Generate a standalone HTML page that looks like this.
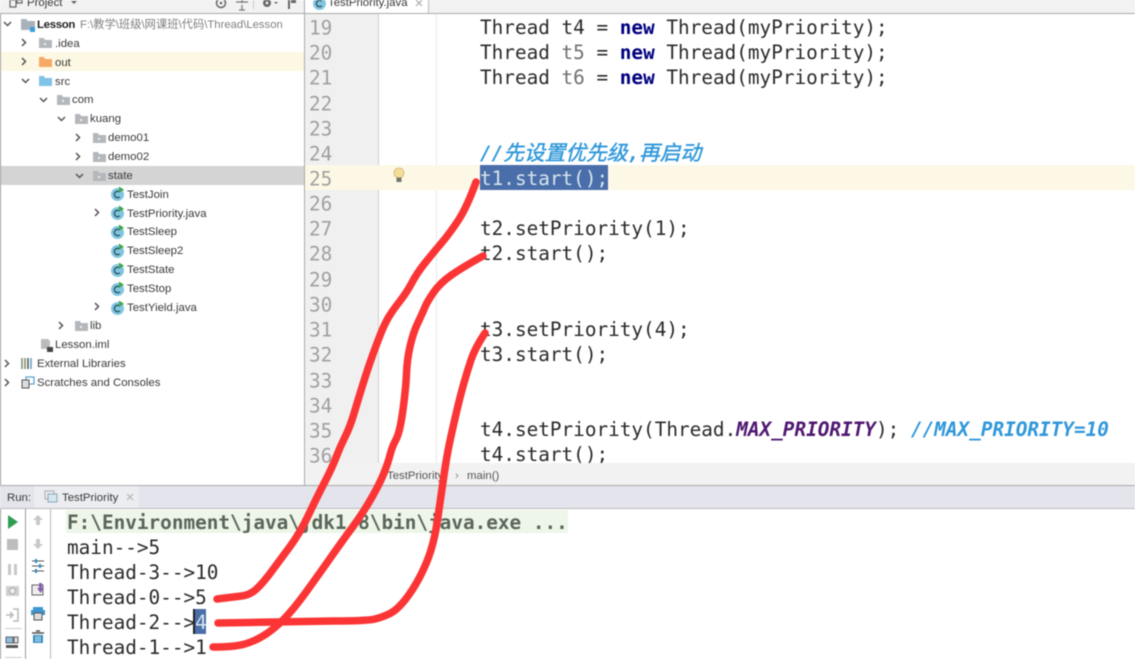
<!DOCTYPE html>
<html><head><meta charset="utf-8"><style>
html,body{margin:0;padding:0;background:#fff}
#r{position:relative;width:1135px;height:659px;overflow:hidden;background:#fff;filter:blur(.4px)}
#r div,#r span.a{position:absolute}
.t{font:11.4px/19px "Liberation Sans","Noto Sans CJK SC",sans-serif;color:#3a3a3a;white-space:nowrap;height:19px}
.c{font:19.35px/25px "DejaVu Sans Mono","Noto Sans CJK SC",monospace;color:#2a2a2a;white-space:pre;height:25px}
.n{left:309px;color:#a0a0a0;transform:translateY(.5px)}
b.k{color:#000080}
.cm{color:#2f97da;font-weight:bold;font-style:italic}
.zh{font-size:20.7px;font-weight:normal;-webkit-text-stroke:.4px #2f97da}
.p{color:#4f1770;font-weight:bold;font-style:italic}
.g{color:#707070}
svg{position:absolute;left:0;top:0}
</style></head><body><div id="r">
<div style="left:0;top:0;width:1135px;height:14px;background:#f2f2f2"></div>
<div style="left:304px;top:0;width:125px;height:13px;background:#fff"></div>
<div style="left:428px;top:0;width:1px;height:13px;background:#bbb"></div>
<div style="left:0;top:13px;width:1135px;height:1px;background:#aaa"></div>
<div style="left:0;top:14px;width:1px;height:645px;background:#999"></div>
<div style="left:304px;top:0;width:1px;height:486px;background:#aaa"></div>
<div style="left:1px;top:52px;width:303px;height:19px;background:#fdf8e3"></div>
<div style="left:1px;top:166px;width:303px;height:19px;background:#d4d4d4"></div>
<div style="left:305px;top:14px;width:74px;height:449px;background:#f0f0f0"></div>
<div style="left:378px;top:14px;width:1px;height:449px;background:#d0d0d0"></div>
<div style="left:436px;top:14px;width:1px;height:449px;background:#e8e8e8"></div>
<div style="left:305px;top:165px;width:830px;height:25px;background:#fdf8e6"></div>
<div style="left:480px;top:165px;width:128px;height:25px;background:#4a6ea9"></div>
<div style="left:305px;top:463px;width:830px;height:22px;background:#f2f2f2"></div>
<div style="left:0;top:485px;width:1135px;height:1px;background:#aaa"></div>
<div style="left:0;top:486px;width:1135px;height:22px;background:#e3e4ec"></div>
<div style="left:34px;top:486px;width:105px;height:23px;background:#ebedf1"></div>
<div style="left:0;top:508px;width:1135px;height:1px;background:#bdbdbd"></div>
<div style="left:25px;top:509px;width:1px;height:150px;background:#999"></div>
<div style="left:50px;top:509px;width:1px;height:150px;background:#b5b5b5"></div>
<div style="left:66px;top:510px;width:502px;height:23px;background:#edf6e9"></div>
<div style="left:194px;top:609px;width:12px;height:25px;background:#4a6ea9"></div>
<div style="left:193px;top:609px;width:2px;height:25px;background:#222"></div>

<svg width="1135" height="659" viewBox="0 0 1135 659">
<defs>
<g id="f"><path d="M0 1h5l1 2h7v8H0z" fill="#b4b8bc"/><rect x="5" y="6" width="2" height="2" fill="#eee"/></g>
<g id="k"><circle cx="6.500" cy="6.500" r="6.500" fill="#7fc6e0"/><path d="M8.800 4.200A3.200 3.200 0 1 0 8.800 8.800" fill="none" stroke="#34505c" stroke-width="1.300"/><path d="M8 -1.500l5 3.200-5 3.200z" fill="#3fa54a"/></g>
<path id="cr" d="M0 0l3.500 3.500L0 7" fill="none" stroke="#555" stroke-width="1.500"/>
<path id="cd" d="M0 0l3.500 3.500L7 0" fill="none" stroke="#555" stroke-width="1.500"/>
</defs>
<!-- top toolbar -->
<path d="M10 0v7h6V0zM17 0h5v3h-5z" fill="none" stroke="#666" stroke-width="1.200"/>
<path d="M71 1l3 3 3-3z" fill="#666"/>
<circle cx="221" cy="3" r="4.500" fill="none" stroke="#666" stroke-width="1.500"/><circle cx="221" cy="3" r="1.300" fill="#666"/>
<path d="M236 2h12M242 5v5M239 10h6M242 0v3" stroke="#777" stroke-width="1.200" fill="none"/>
<rect x="253" y="0" width="1" height="9" fill="#ccc"/>
<circle cx="267" cy="3" r="4" fill="#666"/><circle cx="267" cy="3" r="1.400" fill="#f2f2f2"/><path d="M274 2l2 2 2-2z" fill="#666"/>
<path d="M288 0v9h2V0zM291 0h5v3h-5z" fill="#666"/>
<!-- tree chevrons -->
<use href="#cd" x="4" y="22"/><use href="#cr" x="22" y="39"/><use href="#cr" x="22" y="58"/>
<use href="#cd" x="22" y="79"/><use href="#cd" x="40" y="98"/><use href="#cd" x="58" y="117"/>
<use href="#cr" x="76" y="134"/><use href="#cr" x="76" y="153"/><use href="#cd" x="76" y="174"/>
<use href="#cr" x="95" y="209"/><use href="#cr" x="95" y="303"/><use href="#cr" x="59" y="322"/>
<use href="#cr" x="5" y="360"/><use href="#cr" x="5" y="379"/>
<!-- folder icons -->
<path d="M21 19h5l2 2h7v9H21z" fill="#a9b2ba"/><rect x="30" y="27" width="5" height="5" fill="#3aa0dc"/>
<use href="#f" x="39" y="37"/>
<path d="M39 57h5l1 2h7v8H39z" fill="#f6a866"/>
<path d="M39 76h5l1 2h7v8H39z" fill="#7fc4e6"/>
<use href="#f" x="57" y="94"/><use href="#f" x="75" y="113"/><use href="#f" x="93" y="132"/><use href="#f" x="93" y="151"/><use href="#f" x="93" y="170"/>
<use href="#f" x="75" y="320"/>
<!-- class icons -->
<use href="#k" x="111" y="188"/><use href="#k" x="111" y="207"/><use href="#k" x="111" y="226"/><use href="#k" x="111" y="245"/><use href="#k" x="111" y="264"/><use href="#k" x="111" y="283"/><use href="#k" x="111" y="302"/>
<!-- iml -->
<path d="M41 339h7l2 2v8H41z" fill="#bbb"/><rect x="47" y="347" width="6" height="5" fill="#444"/>
<!-- libs -->
<path d="M22 358v11M25 358v11" stroke="#7a8a6a" stroke-width="1.500"/><path d="M28 358v11" stroke="#555" stroke-width="1.500"/><path d="M31 358v11" stroke="#5aa0c8" stroke-width="1.500"/>
<!-- scratches -->
<rect x="26" y="377" width="8" height="7" fill="none" stroke="#5aa0c8" stroke-width="1.200"/>
<rect x="22" y="380" width="7" height="8" fill="#ddd" stroke="#555"/>
<!-- tab icon -->
<g transform="translate(313,-3)"><circle cx="6.500" cy="6.500" r="6.500" fill="#7fc6e0"/><path d="M8.800 4.200A3.200 3.200 0 1 0 8.800 8.800" fill="none" stroke="#34505c" stroke-width="1.300"/></g>
<path d="M416 0l6 6M422 0l-6 6" stroke="#aaa" stroke-width="1.200"/>
<!-- bulb -->
<circle cx="399" cy="173" r="5" fill="#f5dc98" stroke="#cdb878" stroke-width=".8"/><rect x="396.500" y="177.500" width="5" height="4.500" fill="#77746a"/>
<!-- run tab -->
<rect x="45" y="491" width="9" height="8" fill="none" stroke="#aaa"/><rect x="48" y="494" width="9" height="8" fill="#d6e6ef" stroke="#8fa9b8"/>
<path d="M127 494l6 6M133 494l-6 6" stroke="#b5b5b5" stroke-width="1.200"/>
<!-- run toolbar col1 -->
<path d="M8 515l10 7-10 7z" fill="#2f9e52"/>
<rect x="7" y="539" width="11" height="11" fill="#bdbdbd"/>
<path d="M8 564h3v11H8zM14 564h3v11h-3z" fill="#c8c8c8"/>
<rect x="6" y="586" width="13" height="10" fill="#d0d0d0"/><circle cx="12.500" cy="591" r="3" fill="#eee" stroke="#aaa"/>
<path d="M6 615h7M10 612l3 3-3 3M13 609h5v12h-5" fill="none" stroke="#bbb" stroke-width="1.600"/>
<rect x="5" y="628" width="17" height="1" fill="#ccc"/>
<rect x="6" y="637" width="7" height="6" fill="#8cc0dc" stroke="#444" stroke-width=".8"/><rect x="14" y="637" width="4" height="6" fill="#ddd" stroke="#444" stroke-width=".8"/><rect x="6" y="645" width="12" height="3" fill="#555"/>
<rect x="5" y="657" width="17" height="1" fill="#ccc"/>
<!-- col2 -->
<path d="M38 515l5 5h-3v5h-4v-5h-3z" fill="#c9c9c9"/>
<path d="M38 549l5-5h-3v-5h-4v5h-3z" fill="#c9c9c9"/>
<path d="M32 561h12M32 566h12M32 571h12" stroke="#555" stroke-width="1"/><path d="M36 559v4M40 564v4M36 569v4" stroke="#2f8fc8" stroke-width="2"/>
<rect x="32" y="585" width="11" height="10" fill="#eee" stroke="#666"/><path d="M39 583h3v5h2l-3.500 5-3.500-5h2z" fill="#8a5fb0"/>
<rect x="33" y="607" width="10" height="3" fill="#3f97cf"/><rect x="31" y="610" width="14" height="5" fill="#3f97cf"/><rect x="34" y="613" width="8" height="7" fill="#ddd" stroke="#555"/>
<path d="M32 633h12M36 631h4" stroke="#555" stroke-width="1.400"/><path d="M33 635h10v8H33z" fill="#3f8fc0"/><path d="M36 636v6M38 636v6M40 636v6" stroke="#dff" stroke-width=".8"/>
</svg>

<div class="t" style="left:27px;top:-6px">Project</div>
<div class="t" style="left:37px;top:16px;font-weight:bold;color:#222;letter-spacing:-.3px">Lesson</div>
<div class="t" style="left:80px;top:16px;color:#808080;font-size:11.3px">F:\教学\班级\网课班\代码\Thread\Lesson</div>
<div class="t" style="left:55px;top:35px">.idea</div>
<div class="t" style="left:55px;top:54px">out</div>
<div class="t" style="left:55px;top:73px">src</div>
<div class="t" style="left:72px;top:91px">com</div>
<div class="t" style="left:90px;top:110px">kuang</div>
<div class="t" style="left:108px;top:129px">demo01</div>
<div class="t" style="left:108px;top:148px">demo02</div>
<div class="t" style="left:108px;top:167px">state</div>
<div class="t" style="left:127px;top:186px">TestJoin</div>
<div class="t" style="left:127px;top:205px">TestPriority.java</div>
<div class="t" style="left:127px;top:223px">TestSleep</div>
<div class="t" style="left:127px;top:242px">TestSleep2</div>
<div class="t" style="left:127px;top:261px">TestState</div>
<div class="t" style="left:127px;top:280px">TestStop</div>
<div class="t" style="left:127px;top:299px">TestYield.java</div>
<div class="t" style="left:90px;top:317px">lib</div>
<div class="t" style="left:55px;top:336px">Lesson.iml</div>
<div class="t" style="left:37px;top:355px">External Libraries</div>
<div class="t" style="left:37px;top:374px">Scratches and Consoles</div>
<div class="t" style="left:328px;top:-6px">TestPriority.java</div>
<div class="t" style="left:7px;top:489px">Run:</div>
<div class="t" style="left:62px;top:489px">TestPriority</div>
<div class="t" style="left:387px;top:467px;color:#555">TestPriority</div>
<div class="t" style="left:455px;top:467px;color:#888">›</div>
<div class="t" style="left:467px;top:467px;color:#555">main()</div>

<div class="c n" style="top:15px">19</div>
<div class="c n" style="top:40px">20</div>
<div class="c n" style="top:65px">21</div>
<div class="c n" style="top:91px">22</div>
<div class="c n" style="top:116px">23</div>
<div class="c n" style="top:141px">24</div>
<div class="c n" style="top:166px">25</div>
<div class="c n" style="top:191px">26</div>
<div class="c n" style="top:216px">27</div>
<div class="c n" style="top:241px">28</div>
<div class="c n" style="top:267px">29</div>
<div class="c n" style="top:292px">30</div>
<div class="c n" style="top:317px">31</div>
<div class="c n" style="top:342px">32</div>
<div class="c n" style="top:368px">33</div>
<div class="c n" style="top:393px">34</div>
<div class="c n" style="top:418px">35</div>
<div class="c n" style="top:443px;height:20px;overflow:hidden">36</div>

<div class="c" style="left:480px;top:15px">Thread t4 = <b class="k">new</b> Thread(myPriority);</div>
<div class="c" style="left:480px;top:40px">Thread <span class="g">t5</span> = <b class="k">new</b> Thread(myPriority);</div>
<div class="c" style="left:480px;top:65px">Thread <span class="g">t6</span> = <b class="k">new</b> Thread(myPriority);</div>
<div class="c cm" style="left:480px;top:141px">//<span class="zh">先设置优先级</span>,<span class="zh">再启动</span></div>
<div class="c" style="left:480px;top:166px;color:#d6e4ee">t1.start();</div>
<div class="c" style="left:480px;top:216px">t2.setPriority(1);</div>
<div class="c" style="left:480px;top:241px">t2.start();</div>
<div class="c" style="left:480px;top:317px">t3.setPriority(4);</div>
<div class="c" style="left:480px;top:342px">t3.start();</div>
<div class="c" style="left:480px;top:417px">t4.setPriority(Thread.<span class="p">MAX_PRIORITY</span>); <span class="cm">//MAX_PRIORITY=10</span></div>
<div class="c" style="left:480px;top:442px;height:21px;overflow:hidden">t4.start();</div>

<div class="c" style="left:67px;top:510px;font-weight:bold;color:#5b665b">F:\Environment\java\jdk1.8\bin\java.exe ...</div>
<div class="c" style="left:67px;top:535px">main--&gt;5</div>
<div class="c" style="left:67px;top:560px">Thread-3--&gt;10</div>
<div class="c" style="left:67px;top:585px">Thread-0--&gt;5</div>
<div class="c" style="left:67px;top:610px">Thread-2--&gt;<span style="color:#d6e4ee">4</span></div>
<div class="c" style="left:67px;top:635px">Thread-1--&gt;1</div>

<svg width="1135" height="659" viewBox="0 0 1135 659" fill="none" stroke="#fb3535" stroke-width="7.500" stroke-linecap="round" stroke-linejoin="round">
<path d="M476 182Q467 207 458.500 220Q450 233 441.500 243Q433 253 425 263Q417 273 412 282.500Q407 292 400 301Q393 310 389 316.500Q385 323 381 333Q377 343 372.500 355.500Q368 368 363 384Q358 400 354 413.500Q350 427 345 437Q340 447 336 457.500Q332 468 324.500 482.500Q317 497 308.500 515Q300 533 290 546.500Q280 560 271.500 571.500Q263 583 256.500 589Q250 595 241.500 596L217 599"/>
<path d="M483 256Q463 267 451.500 275Q440 283 433.500 292.500Q427 302 425 307Q423 312 418 322.500Q413 333 410 346.500Q407 360 406.500 373.500Q406 387 403 409.500Q400 432 396 439.500Q392 447 390 455Q388 463 384 473Q380 483 371.500 498Q363 513 353 526.500Q343 540 330 558.500Q317 577 305 593.500Q293 610 283 620Q273 630 263 636Q253 642 243 644.500Q233 647 213 647"/>
<path d="M485 333Q475 348 471 360Q467 372 463.500 384.500Q460 397 456.500 412Q453 427 450.500 438.500Q448 450 446.500 459Q445 468 442.500 485.500Q440 503 437.500 520Q435 537 431 550Q427 563 420 576.500Q413 590 405 600Q397 610 390 613.500Q383 617 375 619Q367 621 333 621L218 623"/>
</svg>
</div></body></html>
